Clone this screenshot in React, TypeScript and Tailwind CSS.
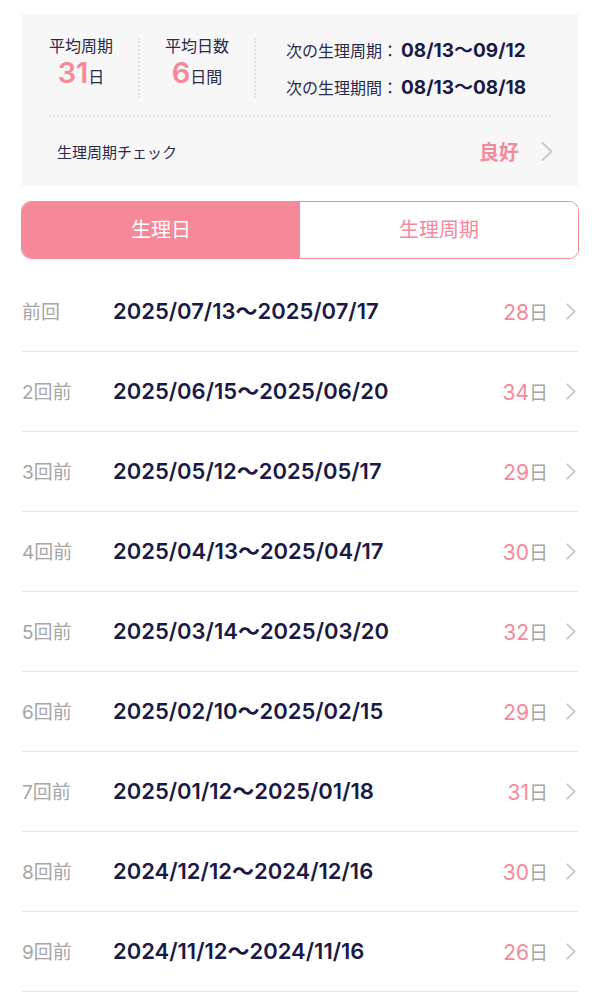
import React from "react";

const rows = [
  { label: "前回", range: "2025/07/13〜2025/07/17", days: 28 },
  { label: "2回前", range: "2025/06/15〜2025/06/20", days: 34 },
  { label: "3回前", range: "2025/05/12〜2025/05/17", days: 29 },
  { label: "4回前", range: "2025/04/13〜2025/04/17", days: 30 },
  { label: "5回前", range: "2025/03/14〜2025/03/20", days: 32 },
  { label: "6回前", range: "2025/02/10〜2025/02/15", days: 29 },
  { label: "7回前", range: "2025/01/12〜2025/01/18", days: 31 },
  { label: "8回前", range: "2024/12/12〜2024/12/16", days: 30 },
  { label: "9回前", range: "2024/11/12〜2024/11/16", days: 26 },
];

function Chevron({ className }: { className?: string }) {
  return (
    <svg viewBox="0 0 12 20" className={className} fill="none">
      <polyline points="1.5,1.5 10.5,10 1.5,18.5" stroke="currentColor" strokeWidth="2" strokeLinecap="round" strokeLinejoin="round" />
    </svg>
  );
}

function Stat({ label, value, unit }: { label: string; value: string; unit: string }) {
  return (
    <div className="flex flex-col items-center w-[64px]">
      <span className="text-[16px] leading-[24px] text-[#2b2a4c]">{label}</span>
      <span className="flex items-baseline h-[30px]">
        <span className="text-[29px] leading-[30px] font-semibold text-[#f5899a]">{value}</span>
        <span className="text-[16px] leading-[30px] text-[#2b2a4c]">{unit}</span>
      </span>
    </div>
  );
}

export default function App() {
  return (
    <div className="w-[600px] bg-white pt-[14px] font-['Inter','Noto_Sans_CJK_JP',sans-serif]">
      <div className="mx-[22px] h-[172px] bg-[#f7f7f7] flex flex-col">
        <div className="flex h-[101px] px-[27px] pt-[20px]">
          <Stat label="平均周期" value="31" unit="日" />
          <div className="ml-[25px] mt-[4px] h-[60px] border-l-2 border-dotted border-[#e2e2e2]" />
          <div className="ml-[25px]">
            <Stat label="平均日数" value="6" unit="日間" />
          </div>
          <div className="ml-[25px] mt-[4px] h-[60px] border-l-2 border-dotted border-[#e2e2e2]" />
          <div className="ml-[30px] pt-[5px] flex flex-col gap-[13px] text-[#2b2a4c]">
            <div className="flex items-baseline leading-[24px]">
              <span className="text-[16px]">次の生理周期：</span>
              <span className="ml-[3px] text-[19px] font-bold text-[#1b1a44]">08/13〜09/12</span>
            </div>
            <div className="flex items-baseline leading-[24px]">
              <span className="text-[16px]">次の生理期間：</span>
              <span className="ml-[3px] text-[19px] font-bold text-[#1b1a44]">08/13〜08/18</span>
            </div>
          </div>
        </div>
        <div className="mx-[27px] border-t-2 border-dotted border-[#e2e2e2]" />
        <div className="flex-1 flex items-center pl-[35px] pr-[25px]">
          <span className="flex-1 mt-[3px] text-[15px] text-[#2b2a4c]">生理周期チェック</span>
          <span className="mt-[2px] text-[20px] font-bold text-[#f5899a]">良好</span>
          <Chevron className="ml-[22px] w-[12px] h-[21px] text-[#c9c9ce]" />
        </div>
      </div>

      <div className="mx-[21px] mt-[15px] h-[58px] flex rounded-[10px] border border-[#f5899a] overflow-hidden">
        <div className="flex-1 flex items-center justify-center bg-[#f5899a] text-white text-[20px]">生理日</div>
        <div className="flex-1 flex items-center justify-center bg-white text-[#f5899a] text-[20px]">生理周期</div>
      </div>

      <div className="mt-[13px]">
        {rows.map((r) => (
          <div key={r.label} className="mx-[22px] h-[80px] flex items-center border-b border-[#e6e6e6]">
            <span className="w-[91px] mt-[4px] text-[19px] text-[#a6a6a6]">{r.label}</span>
            <span className="flex-1 text-[22px] font-semibold text-[#1b1a44]">{r.range}</span>
            <span className="flex items-baseline mt-[2px] text-[19px]">
              <span className="text-[21px] text-[#f5899a]">{r.days}</span>
              <span className="text-[#a6a6a6]">日</span>
            </span>
            <Chevron className="ml-[18px] mr-[2px] w-[10px] h-[17px] text-[#c4c4c8]" />
          </div>
        ))}
      </div>
    </div>
  );
}
